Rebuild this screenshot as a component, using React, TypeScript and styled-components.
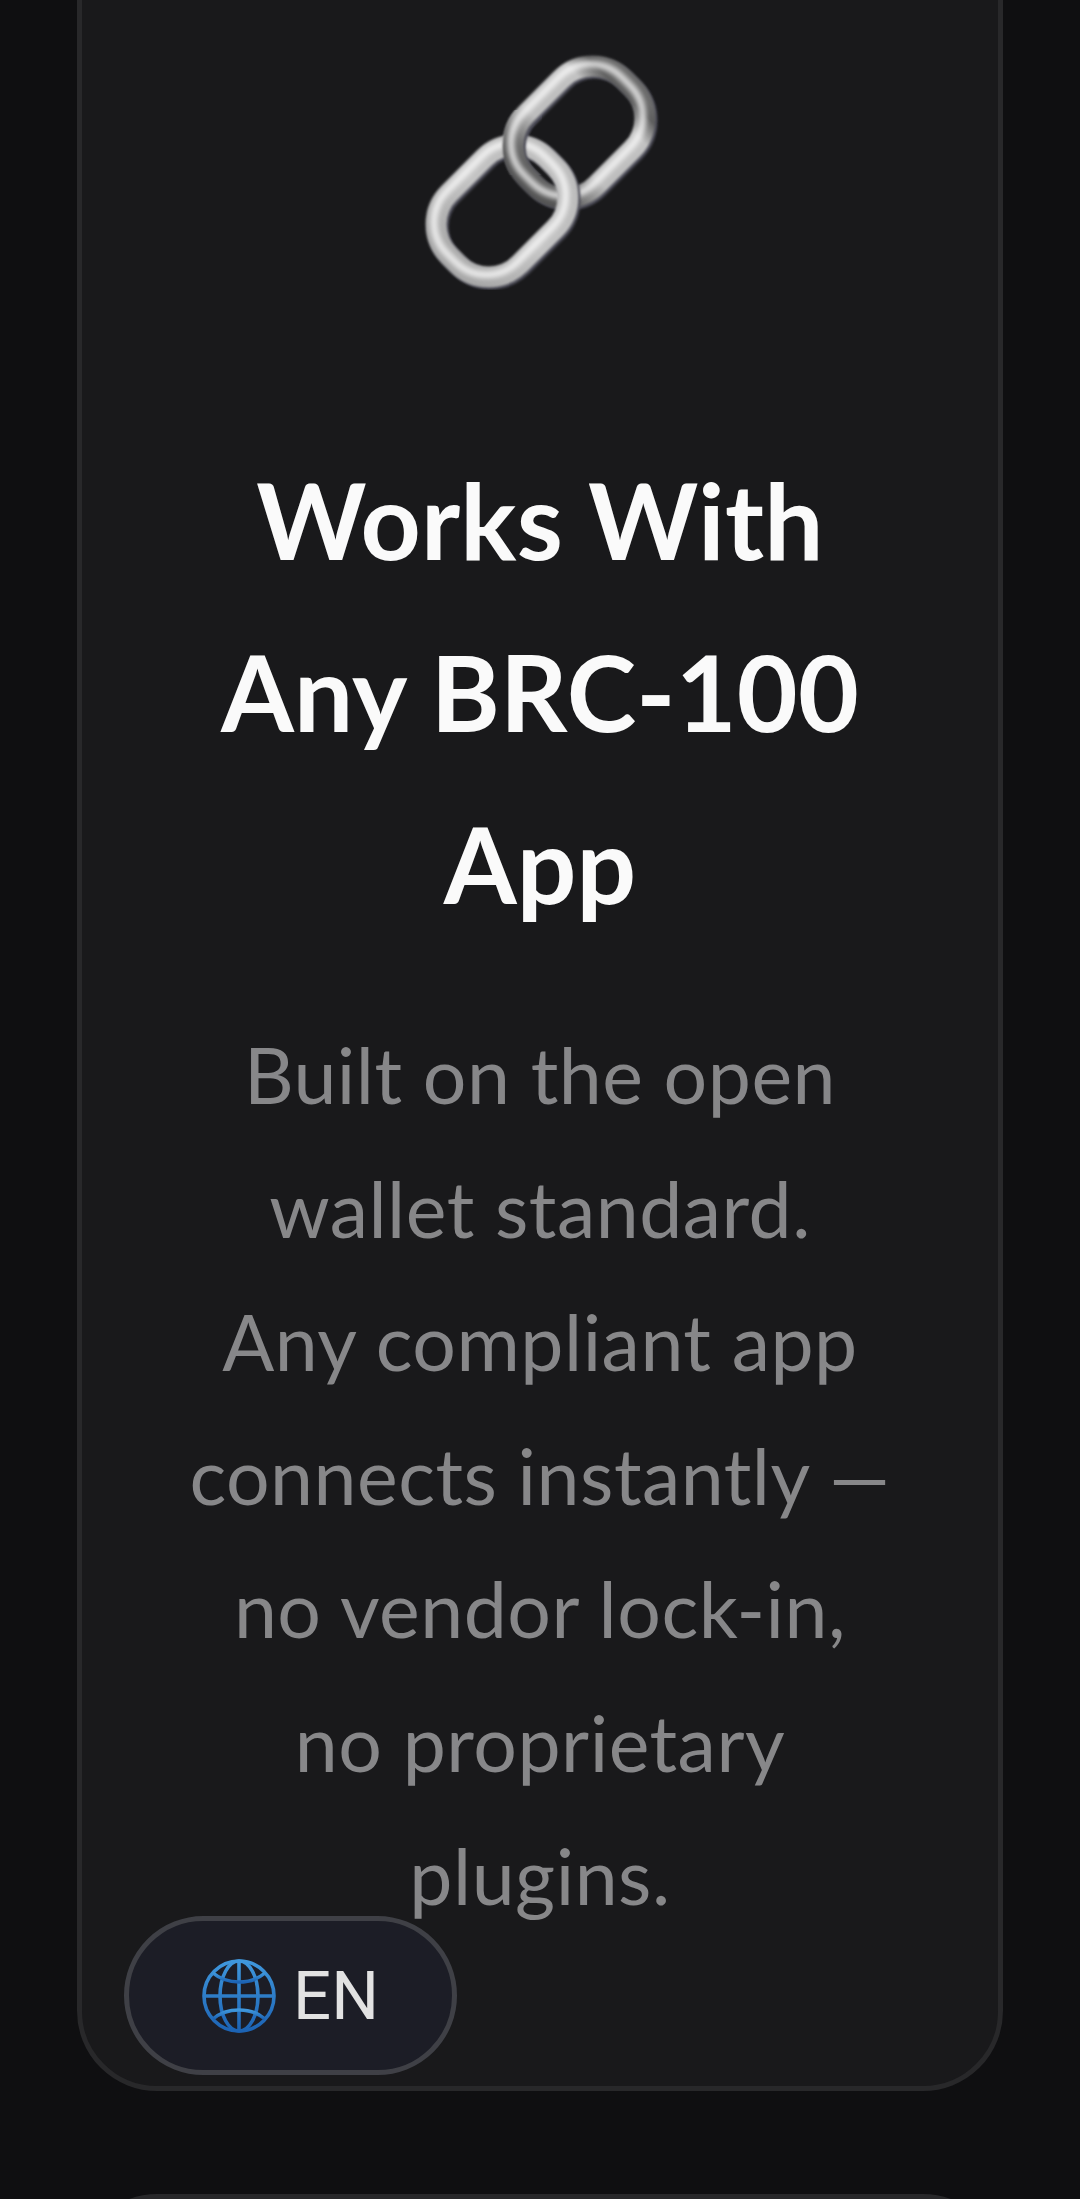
import React from "react";
import styled, { createGlobalStyle } from "styled-components";

const Global = createGlobalStyle`
  html, body { margin: 0; padding: 0; background: #0f0f11; }
  #root { height: 2199px; overflow: hidden; }
`;

const Page = styled.main`
  position: relative;
  width: 1080px;
  height: 2199px;
  overflow: hidden;
  background: #0f0f11;
  padding: 0 77px;
  box-sizing: border-box;
`;

const Stack = styled.div`
  display: flex;
  flex-direction: column;
  gap: 103px;
  margin-top: -100px;
`;

const Card = styled.section`
  box-sizing: border-box;
  width: 926px;
  border: 5px solid #28282a;
  border-radius: 80px;
  background: #19191b;
  display: flex;
  flex-direction: column;
  align-items: center;
  padding: 145px 40px 143px;
`;

const NextCard = styled.section`
  box-sizing: border-box;
  width: 926px;
  height: 200px;
  border: 5px solid #28282a;
  border-radius: 80px;
  background: #19191b;
`;

const Emoji = styled.svg`
  display: block;
  width: 240px;
  height: 240px;
  margin-bottom: 143px;
`;

const Title = styled.h2`
  margin: 0 0 59px;
  font-family: "Lato", "Liberation Sans", sans-serif;
  font-weight: 700;
  font-size: 105px;
  letter-spacing: 0.2px;
  line-height: 172px;
  color: #fafafa;
  text-align: center;
`;

const Body = styled.p`
  margin: 0;
  font-family: "Lato", "Liberation Sans", sans-serif;
  font-weight: 400;
  font-size: 77px;
  letter-spacing: 0.5px;
  line-height: 133.5px;
  color: #878789;
  text-align: center;
  white-space: nowrap;
`;

const LangButton = styled.button`
  position: absolute;
  left: 124px;
  top: 1916px;
  box-sizing: border-box;
  width: 333px;
  height: 159px;
  border: 5px solid #3f4046;
  border-radius: 80px;
  background: #1c1d26;
  display: flex;
  align-items: center;
  justify-content: center;
  gap: 17px;
  padding: 0;
  color: #e2e2e2;
  font-family: "Roboto", "Liberation Sans", sans-serif;
  font-size: 67px;
`;

const GlobeIcon = styled.svg`
  display: block;
  width: 74px;
  height: 74px;
`;

function Link({ id, cx, cy }: { id: string; cx: number; cy: number }) {
  const box = { x: cx - 69, y: cy - 50, width: 138, height: 100, rx: 44, fill: "none" };
  return (
    <g transform={`rotate(-45 ${cx} ${cy})`}>
      <rect {...box} stroke="#4c4c57" strokeWidth={21} filter="url(#soft)" transform="translate(0 3)" />
      <rect {...box} stroke={`url(#${id})`} strokeWidth={21} filter="url(#soft)" />
      <rect {...box} stroke="#ffffff" strokeOpacity={0.75} strokeWidth={7} filter="url(#blur)" transform="translate(0 -3)" />
    </g>
  );
}

export default function App() {
  return (
    <Page>
      <Global />
      <Stack>
        <Card>
          <Emoji viewBox="0 0 240 240" aria-hidden="true">
            <defs>
              <linearGradient id="metalA" x1="0" y1="0" x2="1" y2="0">
                <stop offset="0" stopColor="#555555" />
                <stop offset="0.14" stopColor="#707070" />
                <stop offset="0.35" stopColor="#bdbdbd" />
                <stop offset="0.78" stopColor="#c2c2c2" />
                <stop offset="0.93" stopColor="#5c5c5c" />
                <stop offset="1" stopColor="#6a6a6a" />
              </linearGradient>
              <linearGradient id="metalB" x1="0" y1="0" x2="1" y2="0">
                <stop offset="0" stopColor="#a8a8a8" />
                <stop offset="0.5" stopColor="#c4c4c4" />
                <stop offset="1" stopColor="#bcbcbc" />
              </linearGradient>
              <filter id="soft" x="-20%" y="-20%" width="140%" height="140%">
                <feGaussianBlur stdDeviation="0.9" />
              </filter>
              <filter id="blur" x="-20%" y="-20%" width="140%" height="140%">
                <feGaussianBlur stdDeviation="2.5" />
              </filter>
              <clipPath id="overlap">
                <rect x="60" y="60" width="62" height="65" />
              </clipPath>
            </defs>
            <Link id="metalA" cx={159} cy={82} />
            <Link id="metalB" cx={82} cy={161} />
            <g clipPath="url(#overlap)">
              <Link id="metalA" cx={159} cy={82} />
            </g>
          </Emoji>
          <Title>
            Works With
            <br />
            Any BRC-100
            <br />
            App
          </Title>
          <Body>
            Built on the open
            <br />
            wallet standard.
            <br />
            Any compliant app
            <br />
            connects instantly —
            <br />
            no vendor lock-in,
            <br />
            no proprietary
            <br />
            plugins.
          </Body>
        </Card>
        <NextCard />
      </Stack>
      <LangButton>
        <GlobeIcon viewBox="0 0 74 74" aria-hidden="true">
          <defs>
            <linearGradient id="globeBlue" x1="0" y1="0" x2="0" y2="1">
              <stop offset="0" stopColor="#3f97dc" />
              <stop offset="1" stopColor="#1c63b4" />
            </linearGradient>
          </defs>
          <g fill="none" stroke="url(#globeBlue)" strokeWidth="3.6">
            <circle cx="37" cy="37" r="35" />
            <ellipse cx="37" cy="37" rx="19" ry="35" />
            <path d="M37 2v70M2 37h70" />
            <path d="M11 14c7 6 15 9 26 9s19-3 26-9" />
            <path d="M11 60c7-6 15-9 26-9s19 3 26 9" />
          </g>
        </GlobeIcon>
        EN
      </LangButton>
    </Page>
  );
}
